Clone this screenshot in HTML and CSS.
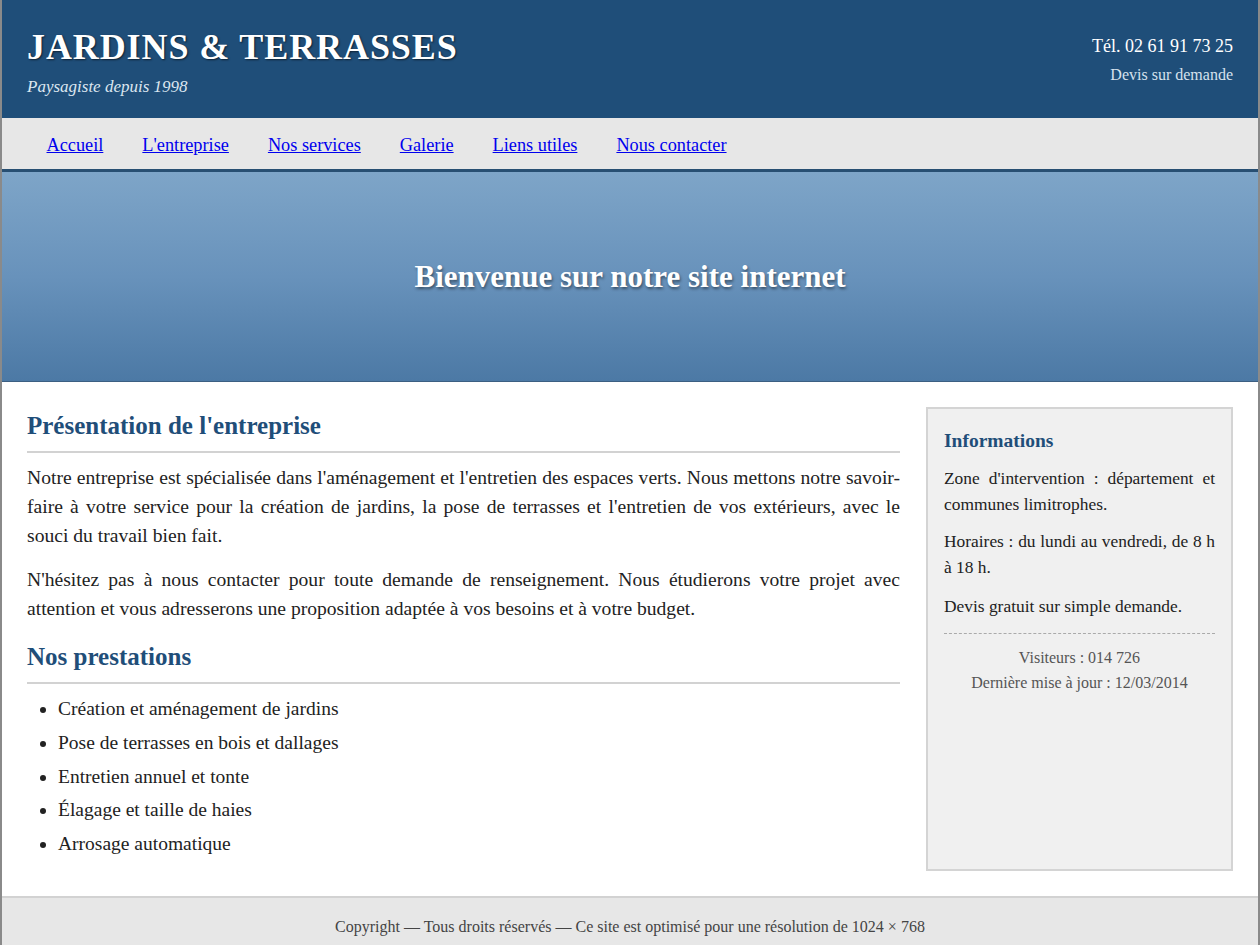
FILE: index.html
```html
<!DOCTYPE html>
<html lang="fr">
<head>
<meta charset="utf-8">
<title>Jardins &amp; Terrasses</title>
<link rel="stylesheet" href="styles.css">
</head>
<body>
<div class="page">
  <header class="header">
    <div class="brand">
      <h1 class="brand-title">JARDINS &amp; TERRASSES</h1>
      <p class="brand-sub">Paysagiste depuis 1998</p>
    </div>
    <div class="contact">
      <p class="contact-tel">Tél. 02 61 91 73 25</p>
      <p class="contact-devis">Devis sur demande</p>
    </div>
  </header>
  <nav class="nav">
    <ul class="nav-list">
      <li><a href="#">Accueil</a></li>
      <li><a href="#">L'entreprise</a></li>
      <li><a href="#">Nos services</a></li>
      <li><a href="#">Galerie</a></li>
      <li><a href="#">Liens utiles</a></li>
      <li><a href="#">Nous contacter</a></li>
    </ul>
  </nav>
  <section class="hero">
    <h2 class="hero-title">Bienvenue sur notre site internet</h2>
  </section>
  <div class="content">
    <main class="main">
      <h2 class="section-title">Présentation de l'entreprise</h2>
      <p class="text">Notre entreprise est spécialisée dans l'aménagement et l'entretien des espaces verts. Nous mettons notre savoir-faire à votre service pour la création de jardins, la pose de terrasses et l'entretien de vos extérieurs, avec le souci du travail bien fait.</p>
      <p class="text">N'hésitez pas à nous contacter pour toute demande de renseignement. Nous étudierons votre projet avec attention et vous adresserons une proposition adaptée à vos besoins et à votre budget.</p>
      <h2 class="section-title">Nos prestations</h2>
      <ul class="services">
        <li>Création et aménagement de jardins</li>
        <li>Pose de terrasses en bois et dallages</li>
        <li>Entretien annuel et tonte</li>
        <li>Élagage et taille de haies</li>
        <li>Arrosage automatique</li>
      </ul>
    </main>
    <aside class="sidebar">
      <h3 class="sidebar-title">Informations</h3>
      <p class="sidebar-text">Zone d'intervention : département et communes limitrophes.</p>
      <p class="sidebar-text">Horaires : du lundi au vendredi, de 8 h à 18 h.</p>
      <p class="sidebar-text">Devis gratuit sur simple demande.</p>
      <div class="sidebar-meta">
        <p>Visiteurs : 014 726</p>
        <p>Dernière mise à jour : 12/03/2014</p>
      </div>
    </aside>
  </div>
  <footer class="footer">
    Copyright — Tous droits réservés — Ce site est optimisé pour une résolution de 1024 × 768
  </footer>
</div>
</body>
</html>
```
FILE: styles.css
```css
html, body {
  margin: 0;
  padding: 0;
  background: #ffffff;
}
body {
  font-family: "Liberation Serif", "Times New Roman", serif;
  color: #222;
}
.page {
  border-left: 2px solid #8a8a8a;
  border-right: 2px solid #8a8a8a;
  box-sizing: border-box;
}
.header {
  background: #1f4e79;
  height: 118px;
  box-sizing: border-box;
  padding: 0 25px;
  display: flex;
  justify-content: space-between;
  align-items: flex-start;
  color: #fff;
}
.brand-title {
  margin: 27px 0 0;
  font-size: 36px;
  line-height: 40px;
  font-weight: bold;
  letter-spacing: 0.9px;
  text-shadow: 1px 1px 2px rgba(0,0,0,0.6);
}
.brand-sub {
  margin: 10px 0 0;
  font-size: 17px;
  line-height: 20px;
  font-style: italic;
  color: #dce6f0;
}
.contact {
  text-align: right;
  padding-top: 35px;
}
.contact-tel {
  margin: 0;
  font-size: 18px;
  line-height: 22px;
}
.contact-devis {
  margin: 8px 0 0;
  font-size: 16px;
  line-height: 20px;
  color: #d6e2ee;
}
.nav {
  background: #e7e7e7;
  height: 51px;
  border-bottom: 3px solid #284f72;
  display: flex;
  align-items: center;
}
.nav-list {
  list-style: none;
  margin: 2px 0 0;
  padding: 0 0 0 25px;
  display: flex;
}
.nav-list a {
  display: block;
  padding: 0 19.5px;
  font-size: 18.3px;
  line-height: 22px;
  color: #0000ee;
}
.hero {
  height: 209px;
  background: linear-gradient(to bottom, #7ea5c8 0%, #6892bb 50%, #4c79a5 100%);
  border-bottom: 1px solid #3c5f82;
  display: flex;
  align-items: center;
  justify-content: center;
}
.hero-title {
  margin: 0;
  font-size: 31px;
  font-weight: bold;
  color: #fff;
  text-shadow: 1px 2px 3px rgba(0,0,0,0.45);
}
.content {
  display: flex;
  gap: 26px;
  padding: 25px;
  align-items: stretch;
}
.main {
  flex: 1;
}
.section-title {
  margin: 0;
  padding: 4px 0 10px;
  font-size: 25px;
  line-height: 30px;
  font-weight: bold;
  color: #1f4e79;
  border-bottom: 2px solid #d2d2d2;
}
.text {
  margin: 10px 0 15px;
  font-size: 19.6px;
  line-height: 29px;
  text-align: justify;
}
.services {
  margin: 8px 0 10px;
  padding-left: 31px;
  font-size: 19.5px;
  line-height: 33.8px;
}
.sidebar {
  width: 307px;
  box-sizing: border-box;
  background: #f0f0f0;
  border: 2px solid #d4d4d4;
  padding: 16px;
}
.sidebar-title {
  margin: 4px 0 12px;
  font-size: 19.5px;
  line-height: 24px;
  font-weight: bold;
  color: #1f4e79;
}
.sidebar-text {
  margin: 0 0 11px;
  font-size: 17.4px;
  line-height: 26px;
  text-align: justify;
}
.sidebar-text + .sidebar-text + .sidebar-text {
  margin-top: 13px;
}
.sidebar-meta {
  border-top: 1px dashed #aaaaaa;
  margin-top: 14px;
  padding-top: 11px;
  text-align: center;
  font-size: 16px;
  line-height: 25px;
  color: #555;
}
.sidebar-meta p {
  margin: 0;
}
.footer {
  background: #e7e7e7;
  border-top: 2px solid #d2d2d2;
  padding: 19px 0 20px;
  line-height: 20px;
  text-align: center;
  font-size: 16px;
  color: #444;
}
```
